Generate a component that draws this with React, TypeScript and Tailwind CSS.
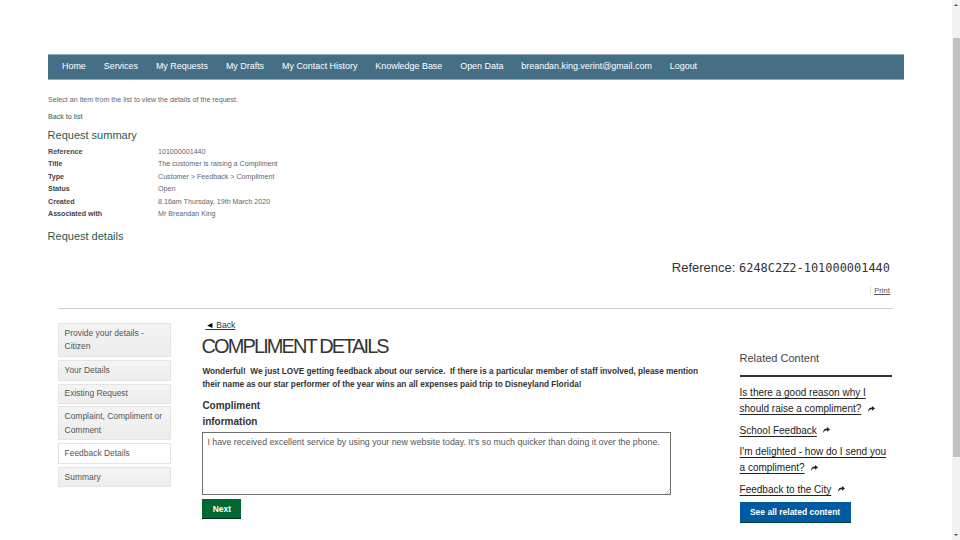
import React from "react";

const NAV = [
  "Home",
  "Services",
  "My Requests",
  "My Drafts",
  "My Contact History",
  "Knowledge Base",
  "Open Data",
  "breandan.king.verint@gmail.com",
  "Logout",
];

const SUMMARY: [string, string][] = [
  ["Reference", "101000001440"],
  ["Title", "The customer is raising a Compliment"],
  ["Type", "Customer > Feedback > Compliment"],
  ["Status", "Open"],
  ["Created", "8.16am Thursday, 19th March 2020"],
  ["Associated with", "Mr Breandan King"],
];

const STEPS = [
  { label: "Provide your details - Citizen", height: "h-[34px]", active: false },
  { label: "Your Details", height: "h-[21px]", active: false },
  { label: "Existing Request", height: "h-[20px]", active: false },
  { label: "Complaint, Compliment or Comment", height: "h-[34px]", active: false },
  { label: "Feedback Details", height: "h-[21px]", active: true },
  { label: "Summary", height: "h-[20px]", active: false },
];

const RELATED = [
  "Is there a good reason why I should raise a compliment?",
  "School Feedback",
  "I'm delighted - how do I send you a compliment?",
  "Feedback to the City",
];

function ShareArrow() {
  return (
    <svg viewBox="0 0 7 6" className="ml-[3.6px] inline-block h-[6px] w-[7px] align-[0.5px]" fill="#222">
      <path d="M4 0 7 2.4 4 4.8V3.3C2.3 3.2 1.1 3.9.6 6-.3 3.4 1.2 1.5 4 1.5Z" />
    </svg>
  );
}

function Scrollbar() {
  return (
    <div className="flex h-[540px] w-[8px] flex-col items-center bg-[#f1f1f1]">
      <svg viewBox="0 0 4 2" className="mt-[4px] h-[2px] w-[4px]" fill="#505050">
        <path d="M2 0 4 2H0Z" />
      </svg>
      <div className="mt-[32px] h-[419px] w-[7px] bg-[#c1c1c1]" />
      <svg viewBox="0 0 4 2" className="mt-auto mb-[4px] h-[2px] w-[4px]" fill="#505050">
        <path d="M0 0H4L2 2Z" />
      </svg>
    </div>
  );
}

export default function App() {
  return (
    <div className="flex h-[540px] w-[960px] justify-between overflow-hidden bg-white font-['Liberation_Sans',Arial,sans-serif] text-[#333]">
      <div className="w-[904px] pt-[54px] pl-[47.6px]">
        <nav className="flex h-[26px] w-[856.4px] gap-[17.95px] border-y border-[#8fa9b8] bg-[#456f87] pl-[14.4px] text-[8.94px] leading-[22px] whitespace-nowrap text-white">
          {NAV.map((item) => (
            <a key={item}>{item}</a>
          ))}
        </nav>

        <p className="mt-[14px] pl-[0.4px] text-[7.13px] leading-[12px] text-[#666]">
          Select an item from the list to view the details of the request.
        </p>
        <p className="mt-[5px] pl-[0.4px] text-[7.13px] leading-[12px] text-[#1d5b50]">Back to list</p>
        <h2 className="mt-[4px] text-[11px] leading-[16px] text-[#1d5b50]">Request summary</h2>
        <dl className="mt-[2.6px] pl-[0.4px] text-[7.13px] leading-[12.5px]">
          {SUMMARY.map(([name, value]) => (
            <div key={name} className="flex">
              <dt className="w-[110px] font-bold text-[#444]">{name}</dt>
              <dd className="text-[#666]">{value}</dd>
            </div>
          ))}
        </dl>
        <h2 className="mt-[7.4px] text-[11px] leading-[16px] text-[#1d5b50]">Request details</h2>

        <div className="ml-[10.4px] flex h-[65px] w-[835px] flex-col items-end border-b border-[#ccc] pt-[14px] pr-[3px]">
          <p className="text-[13px] leading-[20px] whitespace-nowrap">
            Reference:{" "}
            <span className="font-['DejaVu_Sans_Mono',monospace] text-[11.95px]">6248C2Z2-101000001440</span>
          </p>
          <a className="mt-[8px] border-l border-[#ddd] pl-[3px] text-[7.7px] leading-[9px] text-[#555] underline">Print</a>
        </div>

        <div className="ml-[10.4px] flex">
          <ul className="mt-[14px] flex w-[113px] flex-col gap-[2.8px] text-[8.45px] leading-[13.5px] text-[#555]">
            {STEPS.map((step) => (
              <li
                key={step.label}
                className={`${step.height} border border-[#e4e4e4] pt-[2.8px] pr-[4px] pl-[5.6px] ${
                  step.active ? "bg-white" : "bg-linear-to-b from-[#f4f4f4] to-[#ededed]"
                }`}
              >
                {step.label}
              </li>
            ))}
          </ul>

          <main className="ml-[31.4px] w-[500px] pt-[10px]">
            <a className="ml-[3px] block w-fit text-[8.6px] leading-[12px] underline">
              <span className="text-black">◄</span> Back
            </a>
            <h1 className="mt-[3px] -ml-[0.8px] text-[20px] leading-[24px] tracking-[-1.9px] whitespace-nowrap">COMPLIMENT DETAILS</h1>
            <p className="mt-[7px] text-[8.26px] leading-[13px] font-bold whitespace-pre">
              {"Wonderful!  We just LOVE getting feedback about our service.  If there is a particular member of staff involved, please mention\ntheir name as our star performer of the year wins an all expenses paid trip to Disneyland Florida!"}
            </p>
            <label className="mt-[7px] block w-[80px] text-[10px] leading-[16px] font-bold">Compliment information</label>
            <div className="mt-[2px] flex h-[63px] w-[469px] justify-between border border-[#707070] pt-[3px] pl-[4px] text-[8.8px] leading-[12px] whitespace-nowrap text-[#555]">
              I have received excellent service by using your new website today. It's so much quicker than doing it over the phone.
              <svg viewBox="0 0 6 6" className="-ml-[8px] h-[6px] w-[6px] self-end" stroke="#aaa" strokeWidth="0.8">
                <path d="M1 6 6 1M3.5 6 6 3.5" />
              </svg>
            </div>
            <button className="mt-[4px] block h-[20px] w-[39px] border-b border-[#002d18] bg-[#00692f] pt-px text-[8.5px] leading-[18px] font-bold text-white">
              Next
            </button>
          </main>

          <aside className="ml-[37.2px] w-[152px] pt-[42px] text-[#222]">
            <h3 className="h-[26px] border-b-2 border-[#333] text-[11px] leading-[14px] text-[#444]">Related Content</h3>
            <ul className="mt-[8.4px] flex flex-col gap-[5.5px] text-[10px] leading-[16px]">
              {RELATED.map((text) => (
                <li key={text}>
                  <a className="underline underline-offset-[2px]">{text}</a> <ShareArrow />
                </li>
              ))}
            </ul>
            <button className="mt-[4.3px] block h-[21px] w-[111px] border-b border-[#003c2c] bg-[#005a9f] pt-px text-[8.5px] leading-[19px] font-bold whitespace-nowrap text-white">
              See all related content
            </button>
          </aside>
        </div>
      </div>
      <Scrollbar />
    </div>
  );
}
